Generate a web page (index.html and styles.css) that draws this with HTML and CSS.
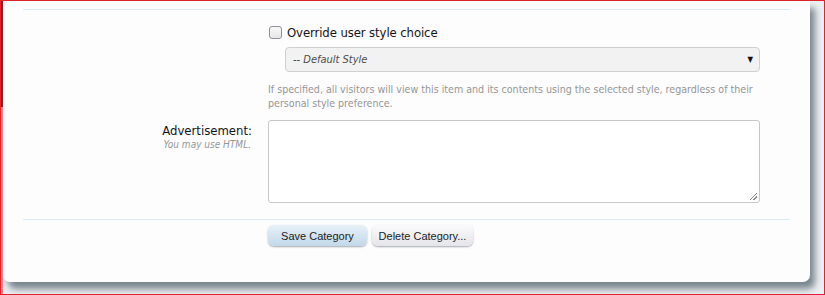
FILE: index.html
```html
<!DOCTYPE html>
<html>
<head>
<meta charset="utf-8">
<link rel="stylesheet" href="styles.css">
</head>
<body>
<div class="frame">
  <div class="strip"><div class="strip-top"></div><div class="strip-bottom"></div></div>
  <div class="stage">
    <div class="panel">
      <div class="divider"></div>
      <div class="row row-style">
        <div class="label-col"></div>
        <div class="field-col">
          <label class="check"><span class="box"></span><span class="check-text">Override user style choice</span></label>
          <div class="select"><span class="select-text">-- Default Style</span><span class="arrow">&#9660;</span></div>
          <p class="hint">If specified, all visitors will view this item and its contents using the selected style, regardless of their personal style preference.</p>
        </div>
      </div>
      <div class="row row-ad">
        <div class="label-col">
          <div class="label">Advertisement:</div>
          <div class="sublabel">You may use HTML.</div>
        </div>
        <div class="field-col">
          <div class="textarea"><span class="grip"></span></div>
        </div>
      </div>
      <div class="divider divider-bottom"></div>
      <div class="row row-buttons">
        <div class="label-col"></div>
        <div class="field-col buttons">
          <span class="btn btn-primary">Save Category</span>
          <span class="btn">Delete Category...</span>
        </div>
      </div>
    </div>
  </div>
</div>
</body>
</html>
```

FILE: styles.css
```css
html, body {
  margin: 0;
  padding: 0;
}
body {
  width: 825px;
  height: 295px;
  overflow: hidden;
  background: #ffffff;
  font-family: "DejaVu Sans Condensed", "Liberation Sans", sans-serif;
}
.frame {
  box-sizing: border-box;
  width: 825px;
  height: 295px;
  border: 1px solid #e0242b;
  display: flex;
  background: #eef1f3;
}
.strip {
  width: 2px;
  display: flex;
  flex-direction: column;
}
.strip-top {
  height: 106px;
  background: #8c1f2c;
}
.strip-bottom {
  flex: 1;
  background: #e48592;
}
.stage {
  flex: 1;
}
.panel {
  box-sizing: border-box;
  width: 807px;
  height: 281px;
  background: #fdfdfe;
  border-radius: 0 0 7px 7px;
  box-shadow: 5px 7px 7px rgba(80, 96, 106, 0.75);
  padding: 8px 20px 0 20px;
}
.divider {
  height: 1px;
  background: #d9ebf5;
}
.row {
  display: flex;
  gap: 16px;
}
.label-col {
  width: 229px;
  text-align: right;
}
.field-col {
  width: 492px;
}
.row-style {
  padding-top: 15px;
}
.check {
  display: flex;
  align-items: center;
  height: 15px;
  gap: 5px;
  padding-left: 1px;
}
.box {
  box-sizing: border-box;
  width: 13px;
  height: 13px;
  border: 1px solid #8f8f9d;
  border-radius: 3px;
  background: linear-gradient(#f8f8f8, #e6e6e6);
}
.check-text {
  font-size: 13px;
  color: #141414;
  letter-spacing: -0.1px;
}
.select {
  box-sizing: border-box;
  margin: 7px 0 0 17px;
  width: 475px;
  height: 25px;
  border: 1px solid #d0d0d0;
  border-radius: 4px;
  background: #f2f2f2;
  display: flex;
  align-items: center;
  justify-content: space-between;
  padding: 0 6px 0 7px;
}
.select-text {
  font-style: italic;
  font-size: 11px;
  color: #4c4c4c;
}
.arrow {
  font-size: 8px;
  color: #111;
}
.hint {
  margin: 10px 0 0 0;
  font-size: 10.6px;
  line-height: 14px;
  color: #969696;
}
.row-ad {
  padding-top: 10px;
}
.label {
  font-size: 13px;
  color: #141414;
  padding-top: 3px;
  line-height: 16px;
}
.sublabel {
  font-size: 10px;
  font-style: italic;
  color: #969696;
  line-height: 12px;
  padding-right: 1px;
}
.textarea {
  box-sizing: border-box;
  position: relative;
  height: 83px;
  border: 1px solid #c8c8c8;
  border-radius: 3px;
  background: #ffffff;
}
.grip {
  position: absolute;
  right: 2px;
  bottom: 2px;
  width: 7px;
  height: 7px;
  background: linear-gradient(135deg, transparent 45%, #888 45%, #888 55%, transparent 55%, transparent 70%, #888 70%, #888 80%, transparent 80%);
}
.divider-bottom {
  margin-top: 16px;
}
.row-buttons {
  padding-top: 5px;
}
.buttons {
  display: flex;
  gap: 5px;
}
.btn {
  box-sizing: border-box;
  height: 21px;
  width: 101px;
  border-radius: 6px;
  font-family: "Liberation Sans", sans-serif;
  font-size: 11px;
  color: #222;
  display: flex;
  align-items: center;
  justify-content: center;
  background: linear-gradient(#fbfbfc, #e4e4ea);
  box-shadow: 0 1px 2px rgba(90, 100, 110, 0.55);
}
.btn-primary {
  width: 99px;
  background: linear-gradient(#e8f1f8, #c2d8ea);
}
```
